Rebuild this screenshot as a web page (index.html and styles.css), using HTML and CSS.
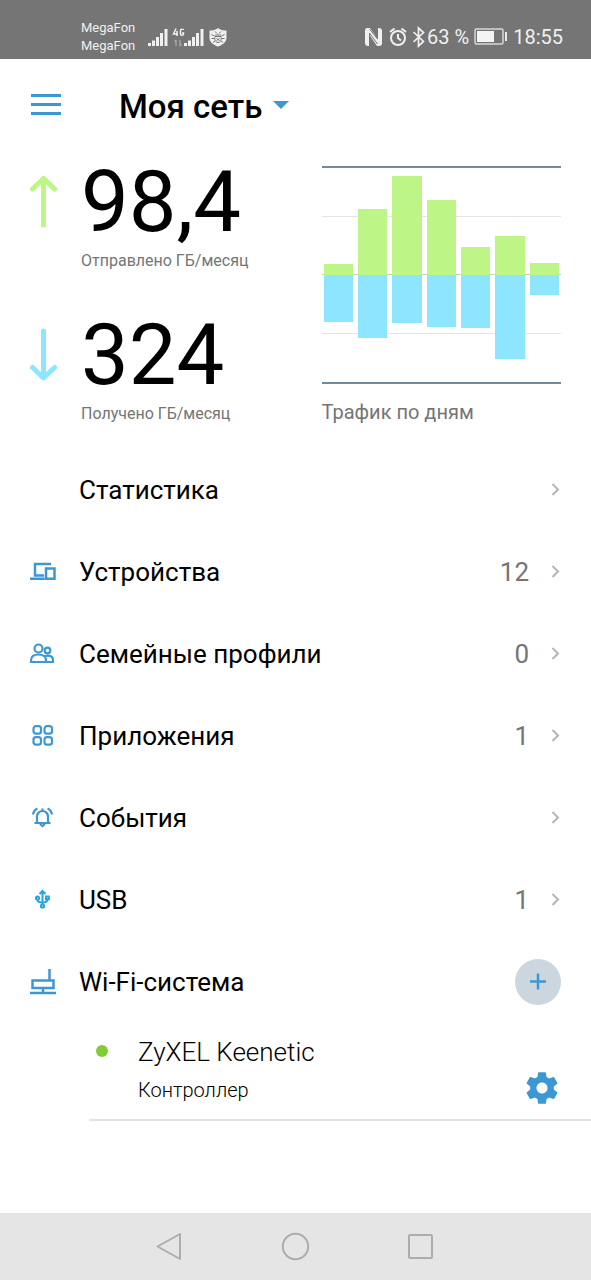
FILE: index.html
```html
<!DOCTYPE html>
<html lang="ru">
<head>
<meta charset="utf-8">
<meta name="viewport" content="width=device-width, initial-scale=1">
<title>Моя сеть</title>
<link rel="stylesheet" href="styles.css">
</head>
<body>
<div class="status-bar">
  <div class="status-left">
    <div class="carriers"><span>MegaFon</span><span>MegaFon</span></div>
    <svg class="status-svg" width="80" height="22" viewBox="0 0 80 22" fill="#f0f0f0" aria-hidden="true">
      <path d="M0 17h3v3H0zM4 14.500h3V20H4zM8 11h3v9H8zM12 7h3v13h-3zM16.500 3h3v17h-3z"/>
      <path d="M36 17h3v3h-3zM40 14.500h3V20h-3zM44 11h3v9h-3zM48 7h3v13h-3zM52.500 3h3v17h-3z"/>
      <path d="M28 2.500l-2.500 5.500h4.500M29 5v5M35.500 4q0-.800-1.500-.800t-1.500 1v4q0 1 1.500 1t1.500-1V7h-1.500" fill="none" stroke="#f0f0f0" stroke-width="1.500"/>
      <path d="M28 20v-6M26.500 15.500L28 14M32 14v6M33.500 18.500L32 20" fill="none" stroke="#aaa" stroke-width="1.300"/>
      <path d="M70 2c2.500 2 5 2.500 8.500 2.500v7.500c0 4.500-4.500 7-8.500 8.500-4-1.500-8.500-4-8.500-8.500V4.500c3.500 0 6-.500 8.500-2.500z"/>
      <path d="M67 5.500l2 2M73 5.500l-2 2M63.500 8.500l3 1.500M76.500 8.500l-3 1.500M63.500 12.500h3M76.500 12.500h-3M65 16.500l2-1.500M75 16.500L73 15M67 9h6M67 10.500c-.800 3 .500 6 3 6s3.800-3 3-6zM68.500 12.500l3 2M71.500 12.500l-3 2" fill="none" stroke="#757575" stroke-width="1"/>
    </svg>
  </div>
  <div class="status-right">
    <svg width="64" height="22" viewBox="0 0 64 22" fill="none" stroke="#f0f0f0" aria-hidden="true">
      <path d="M4 2h3l7 10V2h2q3 0 3 3v12q0 3-3 3h-2L7 9.500V20H5q-3 0-3-3V5q0-3 2-3z" fill="#f0f0f0" stroke="none"/>
      <path d="M6.500 20V7l8 11M14.500 2v11L6.500 3" stroke="#757575" stroke-width="1"/>
      <circle cx="35" cy="12" r="7" stroke-width="2"/>
      <path d="M35 8v4l3 2.500M27 6l4.500-3.500M43 6l-4.500-3.500" stroke-width="2"/>
      <path d="M50.500 6l10 9.500-5 4.500V2l5 4.500-10 9.500" stroke-width="1.700"/>
    </svg>
    <span>63&nbsp;%</span>
    <svg class="battery" width="34" height="18" viewBox="0 0 34 18" aria-hidden="true">
      <rect x="1" y="1" width="28" height="15" rx="1.500" fill="none" stroke="#d8d8d8" stroke-width="1.500"/>
      <rect x="3" y="3" width="17" height="11" fill="#f4f4f4"/>
      <path d="M31 4h2v9h-2z" fill="#e8e8e8"/>
    </svg>
    <time>18:55</time>
  </div>
</div>

<header class="app-header">
  <button class="icon-button" type="button" aria-label="Меню">
    <svg width="32" height="22" viewBox="0 0 32 22" fill="#3c98d2"><path d="M1 0h30v3H1zM1 9h30v3H1zM1 18h30v3H1z"/></svg>
  </button>
  <button class="network-picker" type="button">
    <span>Моя сеть</span>
    <svg width="16" height="8" viewBox="0 0 16 8" fill="#3c98d2" aria-hidden="true"><path d="M0 0h16L8 8z"/></svg>
  </button>
</header>

<main>
  <section class="summary">
    <div class="totals">
      <div class="total">
        <svg width="30" height="54" viewBox="0 0 30 54" fill="none" stroke="#bdf587" stroke-width="5" stroke-linecap="round" stroke-linejoin="round" aria-hidden="true"><path d="M14.500 50V4M3.500 14l11-10.500L25.500 14"/></svg>
        <div><div class="total-value">98,4</div><div class="total-label">Отправлено ГБ/месяц</div></div>
      </div>
      <div class="total">
        <svg width="30" height="54" viewBox="0 0 30 54" fill="none" stroke="#8ee5ff" stroke-width="5" stroke-linecap="round" stroke-linejoin="round" aria-hidden="true"><path d="M14.500 3v46.500M3.500 39.500l11 10.500 11-10.500"/></svg>
        <div><div class="total-value">324</div><div class="total-label">Получено ГБ/месяц</div></div>
      </div>
    </div>
    <figure class="traffic">
      <div class="plot">
        <div class="day"><i class="sent" style="height:11px"></i><i class="received" style="height:47px"></i></div>
        <div class="day"><i class="sent" style="height:66px"></i><i class="received" style="height:63px"></i></div>
        <div class="day"><i class="sent" style="height:99px"></i><i class="received" style="height:48px"></i></div>
        <div class="day"><i class="sent" style="height:75px"></i><i class="received" style="height:52px"></i></div>
        <div class="day"><i class="sent" style="height:28px"></i><i class="received" style="height:53px"></i></div>
        <div class="day"><i class="sent" style="height:39px"></i><i class="received" style="height:84px"></i></div>
        <div class="day"><i class="sent" style="height:12px"></i><i class="received" style="height:20px"></i></div>
      </div>
      <figcaption>Трафик по дням</figcaption>
    </figure>
  </section>

  <nav class="menu">
    <a class="row" href="#stats"><span class="row-icon"></span><span class="row-title">Статистика</span>
      <svg class="chevron" width="10" height="14" viewBox="0 0 10 14"><path d="M1.500 1l5.500 5.500L1.500 12"/></svg></a>
    <a class="row" href="#devices"><span class="row-icon">
      <svg width="28" height="22" viewBox="0 0 28 22" fill="none" stroke="#3c98d2" stroke-width="2.500"><path d="M22 3H6v11.500h9M1 17.800h14.500M17 7.500h8.500v10.300H17z"/></svg></span><span class="row-title">Устройства</span><span class="count">12</span>
      <svg class="chevron" width="10" height="14" viewBox="0 0 10 14"><path d="M1.500 1l5.500 5.500L1.500 12"/></svg></a>
    <a class="row" href="#profiles"><span class="row-icon">
      <svg width="28" height="22" viewBox="0 0 28 22" fill="none" stroke="#3c98d2" stroke-width="2.200"><circle cx="9.500" cy="5.500" r="4"/><circle cx="18.500" cy="7.500" r="2.800"/><path d="M2 19v-1.500c0-4 3-6 7.500-6s7.500 2 7.500 6V19zM15.500 13.500c4-2 8.500-.500 8.500 3.500v2h-6"/></svg></span><span class="row-title">Семейные профили</span><span class="count">0</span>
      <svg class="chevron" width="10" height="14" viewBox="0 0 10 14"><path d="M1.500 1l5.500 5.500L1.500 12"/></svg></a>
    <a class="row" href="#apps"><span class="row-icon">
      <svg width="28" height="22" viewBox="0 0 28 22" fill="none" stroke="#3c98d2" stroke-width="2.200"><rect x="4.500" y="1.200" width="7.500" height="7.500" rx="2.500"/><rect x="15.500" y="1.200" width="7.500" height="7.500" rx="2.500"/><rect x="4.500" y="12.200" width="7.500" height="7.500" rx="2.500"/><rect x="15.500" y="12.200" width="7.500" height="7.500" rx="2.500"/></svg></span><span class="row-title">Приложения</span><span class="count">1</span>
      <svg class="chevron" width="10" height="14" viewBox="0 0 10 14"><path d="M1.500 1l5.500 5.500L1.500 12"/></svg></a>
    <a class="row" href="#events"><span class="row-icon">
      <svg width="28" height="22" viewBox="0 0 28 22" fill="none" stroke="#3c98d2" stroke-width="2.200"><path d="M5.500 16h16M8 16V9.500a5.500 5.500 0 0 1 11 0V16M13.500 4V1.500M11 17l2.500 2 2.500-2M8.500 1.500C6 2.500 4.500 4.500 4 7.500M18.500 1.500c2.500 1 4 3 4.500 6"/></svg></span><span class="row-title">События</span>
      <svg class="chevron" width="10" height="14" viewBox="0 0 10 14"><path d="M1.500 1l5.500 5.500L1.500 12"/></svg></a>
    <a class="row" href="#usb"><span class="row-icon">
      <svg width="28" height="22" viewBox="0 0 28 22" fill="none" stroke="#25a4df" stroke-width="2"><path d="M13.500 15.500V2.500M10.500 5l3-3 3 3M8.500 10.500c0 2.500 2 3 5 3s5-.500 5-3"/><circle cx="8.500" cy="9" r="1.600"/><circle cx="13.500" cy="17" r="1.600"/><path d="M17 7.500h2.800v2.800H17z"/></svg></span><span class="row-title">USB</span><span class="count">1</span>
      <svg class="chevron" width="10" height="14" viewBox="0 0 10 14"><path d="M1.500 1l5.500 5.500L1.500 12"/></svg></a>
    <div class="row"><span class="row-icon">
      <svg width="28" height="28" viewBox="0 0 28 28" fill="none" stroke="#3c98d2" stroke-width="2.500"><path d="M3.500 12.500h21v7.500h-21zM20.500 12.500V1M14 20v4M1 25h26"/></svg></span><span class="row-title">Wi-Fi-система</span>
      <button class="add-button" type="button" aria-label="Добавить">
        <svg width="18" height="18" viewBox="0 0 18 18" stroke="#3c98d2" stroke-width="2.500"><path d="M1 8.500h16M9 .500v16"/></svg>
      </button></div>
  </nav>

  <section class="node">
    <span class="online-dot"></span>
    <div class="node-text"><div class="node-name">ZyXEL Keenetic</div><div class="node-role">Контроллер</div></div>
    <button class="icon-button gear" type="button" aria-label="Настройки">
      <svg width="38" height="38" viewBox="0 0 24 24" fill="#3c98d2"><path d="M19.430 12.980c.040-.320.070-.640.070-.980s-.030-.660-.070-.980l2.110-1.650c.190-.150.240-.420.120-.640l-2-3.460c-.120-.220-.390-.300-.610-.220l-2.490 1c-.520-.400-1.080-.730-1.690-.980l-.380-2.650C14.460 2.180 14.250 2 14 2h-4c-.250 0-.460.180-.490.420l-.380 2.650c-.610.250-1.170.590-1.690.980l-2.490-1c-.230-.090-.490 0-.610.220l-2 3.460c-.130.220-.070.490.120.640l2.110 1.650c-.040.320-.070.650-.070.980s.030.660.070.980l-2.110 1.650c-.190.150-.240.420-.120.640l2 3.460c.120.220.390.300.610.220l2.490-1c.520.400 1.080.730 1.690.980l.380 2.650c.030.240.240.420.490.420h4c.250 0 .460-.180.490-.420l.380-2.650c.610-.250 1.170-.590 1.690-.980l2.490 1c.230.090.490 0 .610-.220l2-3.460c.120-.220.070-.490-.120-.640l-2.110-1.650zM12 15.500c-1.930 0-3.500-1.570-3.500-3.500s1.570-3.500 3.500-3.500 3.500 1.570 3.500 3.500-1.570 3.500-3.500 3.500z"/></svg>
    </button>
  </section>
</main>

<footer class="system-nav">
  <button class="icon-button" type="button" aria-label="Назад"><svg width="30" height="30" viewBox="0 0 30 30"><path d="M26 2v25L3.500 14.500z"/></svg></button>
  <button class="icon-button" type="button" aria-label="Домой"><svg width="30" height="30" viewBox="0 0 30 30"><circle cx="14.500" cy="14.500" r="12.700"/></svg></button>
  <button class="icon-button" type="button" aria-label="Недавние"><svg width="30" height="30" viewBox="0 0 30 30"><rect x="2" y="3" width="23" height="23" rx="1"/></svg></button>
</footer>
</body>
</html>
```

FILE: styles.css
```css
* { box-sizing: border-box; }
body {
  margin: 0;
  min-height: 100vh;
  display: flex;
  flex-direction: column;
  background: #fff;
  color: #000;
  font-family: Roboto, "Noto Sans", sans-serif;
}
svg { display: block; flex: none; }
button { padding: 0; border: 0; background: none; font: inherit; color: inherit; cursor: pointer; }
a { color: inherit; text-decoration: none; }
main { flex: 1; }

.status-bar {
  height: 59px;
  padding: 14px 28px 0 81px;
  display: flex;
  justify-content: space-between;
  align-items: center;
  background: #757575;
  color: #f0f0f0;
}
.status-left, .status-right { display: flex; align-items: center; }
.status-left { gap: 13px; }
.status-right { font-size: 20px; }
.carriers { display: flex; flex-direction: column; font-size: 13px; line-height: 18px; }
.battery { margin: 0 5px; }

.app-header {
  height: 92px;
  padding: 0 30px;
  display: flex;
  align-items: center;
  gap: 57px;
}
.network-picker { display: flex; align-items: center; gap: 11px; font-size: 33px; font-weight: 500; line-height: 40px; }
.network-picker span { padding-top: 3px; }

.summary { padding: 15px 30px 0 29px; display: flex; justify-content: space-between; }
.total { height: 153px; display: flex; gap: 22px; }
.total svg { margin-top: 9px; }
.total-value { font-size: 85px; line-height: 72px; }
.total-label { margin-top: 13px; font-size: 16px; line-height: 20px; color: #757575; }

.traffic { width: 45%; max-width: 480px; margin: 0; flex: none; }
.plot {
  height: 218px;
  padding: 0 2px;
  display: flex;
  gap: 5px;
  border-top: 2px solid #6f8b9c;
  border-bottom: 2px solid #6f8b9c;
  background:
    linear-gradient(#e4e4e4, #e4e4e4) 0 48px / 100% 1px no-repeat,
    linear-gradient(#ccc, #ccc) 0 106px / 100% 1px no-repeat,
    linear-gradient(#e4e4e4, #e4e4e4) 0 165px / 100% 1px no-repeat;
}
.day { flex: 1; display: grid; grid-template-rows: 1fr 1fr; }
.sent { align-self: end; background: #bdf587; }
.received { align-self: start; background: #8ee5ff; }
.traffic figcaption { margin-top: 16px; font-size: 20px; line-height: 24px; color: #757575; }

.menu { margin-top: -23px; }
.row { height: 82px; padding: 0 30px 0 29px; display: flex; align-items: center; font-size: 26px; line-height: 32px; }
.row-icon { width: 50px; flex: none; }
.row-title { flex: 1; }
.count { color: #757575; margin-right: 22px; }
.chevron { fill: none; stroke: #b5b5b5; stroke-width: 2; }
.add-button { width: 46px; height: 46px; border-radius: 50%; background: #ccd6df; display: grid; place-items: center; }

.node { margin-left: 89px; padding: 12px 30px 12px 7px; display: flex; align-items: flex-start; border-bottom: 2px solid #e2e2e2; }
.online-dot { width: 12px; height: 12px; margin: 10px 30px 0 0; border-radius: 50%; background: #80cc33; }
.node-text { flex: 1; padding-bottom: 4px; font-weight: 300; }
.node-name { font-size: 26px; line-height: 34px; }
.node-role { margin-top: 8px; font-size: 20px; line-height: 26px; }
.gear { align-self: flex-end; }

.system-nav { height: 67px; padding: 0 154px; display: flex; align-items: center; justify-content: space-between; background: #e5e5e5; }
.system-nav svg { fill: none; stroke: #adadad; stroke-width: 2; stroke-linejoin: round; }
```
